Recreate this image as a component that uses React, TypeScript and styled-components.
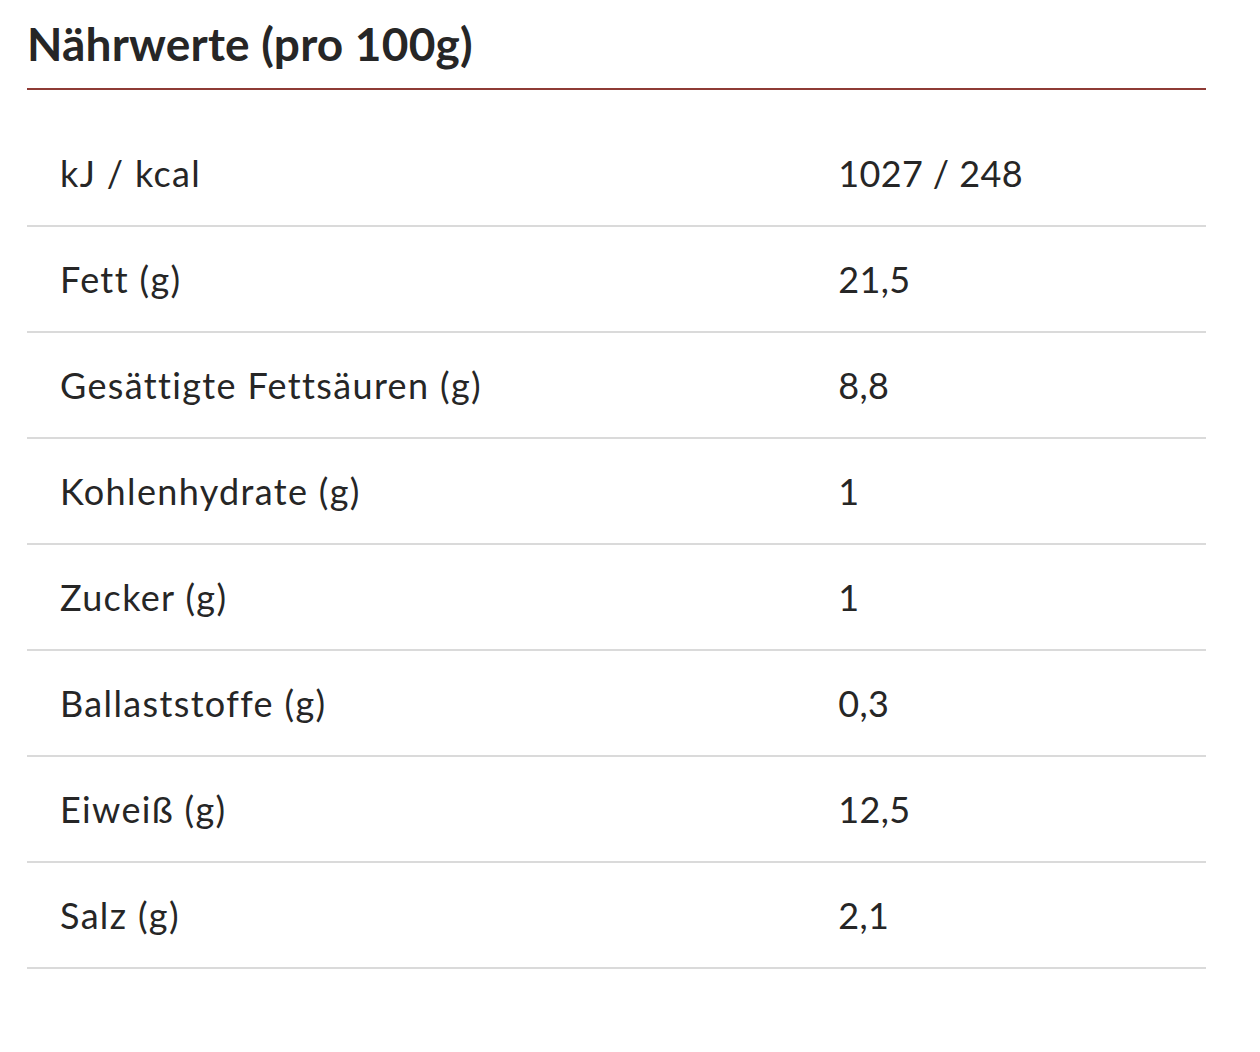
import styled, { createGlobalStyle } from 'styled-components';

const GlobalStyle = createGlobalStyle`
  body {
    margin: 0;
    background: #fff;
    font-family: Lato, "Noto Sans", sans-serif;
    color: #2b2b2b;
  }
`

const rows: [string, string][] = [
  ['kJ / kcal', '1027 / 248'],
  ['Fett (g)', '21,5'],
  ['Gesättigte Fettsäuren (g)', '8,8'],
  ['Kohlenhydrate (g)', '1'],
  ['Zucker (g)', '1'],
  ['Ballaststoffe (g)', '0,3'],
  ['Eiweiß (g)', '12,5'],
  ['Salz (g)', '2,1'],
]

export default function App() {
  return (
    <>
      <GlobalStyle />
      <Section>
        <Title>Nährwerte (pro 100g)</Title>
        <Table>
          <tbody>
            {rows.map(([label, value]) => (
              <Row key={label}>
                <Label>{label}</Label>
                <Value>{value}</Value>
              </Row>
            ))}
          </tbody>
        </Table>
      </Section>
    </>
  )
}

export const Section = styled.div`
  width: 1179px;
  padding: 14px 0 0 27px;
`
export const Title = styled.h2`
  margin: 0;
  padding-bottom: 14px;
  font-size: 46px;
  line-height: 60px;
  font-weight: 700;
  letter-spacing: 0.2px;
  color: #262626;
  border-bottom: 2px solid #8e3b35;
`
export const Table = styled.table`
  width: 100%;
  margin-top: 30px;
  border-collapse: collapse;
`
export const Row = styled.tr`
  height: 106px;
  border-bottom: 2px solid #dadada;
`
const Cell = styled.td`
  padding: 0 0 0 33px;
  font-size: 36px;
  color: #262626;
  vertical-align: middle;
`
export const Label = styled(Cell)`
  width: 66%;
  letter-spacing: 1.35px;
`
export const Value = styled(Cell)`
  letter-spacing: 0.4px;
`
